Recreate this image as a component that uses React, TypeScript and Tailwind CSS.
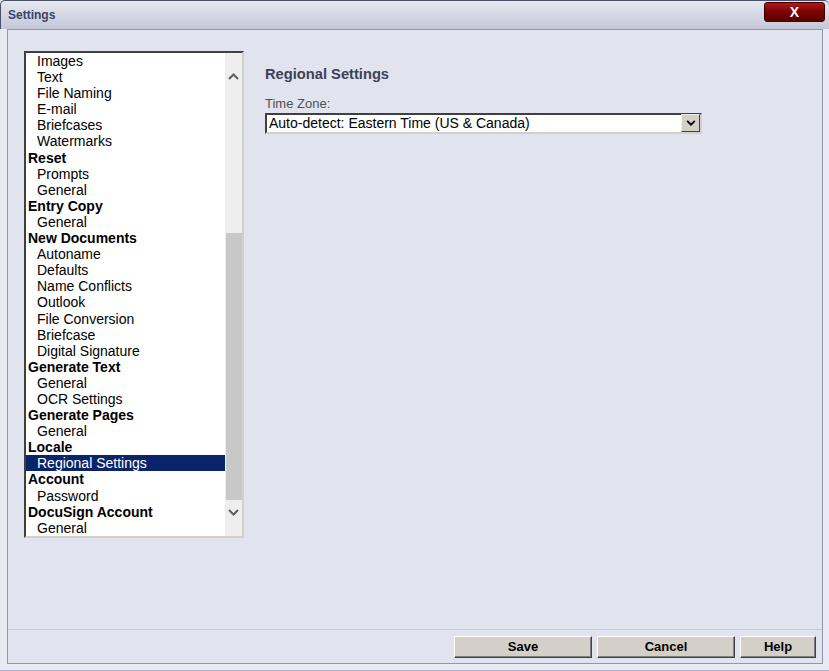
const font = { fontFamily: '"Liberation Sans", Arial, sans-serif' };

type Row = { label: string; header?: boolean; selected?: boolean };

const rows: Row[] = [
  { label: "Images" },
  { label: "Text" },
  { label: "File Naming" },
  { label: "E-mail" },
  { label: "Briefcases" },
  { label: "Watermarks" },
  { label: "Reset", header: true },
  { label: "Prompts" },
  { label: "General" },
  { label: "Entry Copy", header: true },
  { label: "General" },
  { label: "New Documents", header: true },
  { label: "Autoname" },
  { label: "Defaults" },
  { label: "Name Conflicts" },
  { label: "Outlook" },
  { label: "File Conversion" },
  { label: "Briefcase" },
  { label: "Digital Signature" },
  { label: "Generate Text", header: true },
  { label: "General" },
  { label: "OCR Settings" },
  { label: "Generate Pages", header: true },
  { label: "General" },
  { label: "Locale", header: true },
  { label: "Regional Settings", selected: true },
  { label: "Account", header: true },
  { label: "Password" },
  { label: "DocuSign Account", header: true },
  { label: "General" },
];

function Chevron({ up, className }: { up?: boolean; className?: string }) {
  return (
    <svg width="11" height="7" viewBox="0 0 11 7" className={className}>
      <path
        d={up ? "M1 6 L5.5 1.5 L10 6" : "M1 1 L5.5 5.5 L10 1"}
        fill="none"
        stroke="currentColor"
        strokeWidth="2"
      />
    </svg>
  );
}

function DialogButton({ label, width }: { label: string; width: string }) {
  return (
    <button
      type="button"
      className={`${width} h-[22px] bg-[#d4d0c8] border border-t-white border-l-white border-r-[#404040] border-b-[#404040] shadow-[inset_-1px_-1px_0_#808080] text-[13px] font-bold text-black leading-none`}
    >
      {label}
    </button>
  );
}

export default function App() {
  return (
    <div
      className="w-[829px] h-[671px] bg-[#e9eaf1] flex flex-col border-b border-[#b0b4c8] overflow-hidden"
      style={font}
    >
      {/* title bar */}
      <div className="h-[29px] shrink-0 flex justify-between rounded-t-[5px] border-t border-l border-[#4a5068] bg-gradient-to-b from-[#e6e8f0] to-[#c4c7d8]">
        <div className="pl-[7px] pt-[6px] text-[12px] font-bold text-[#3b4463] leading-[16px]">
          Settings
        </div>
        <div className="mt-[1px] mr-[4px] w-[61px] h-[20px] rounded-[3px] border border-[#3a0000] bg-gradient-to-b from-[#b01818] via-[#7c0404] to-[#5a0000] flex items-center justify-center text-white text-[14px] font-bold leading-none">
          X
        </div>
      </div>

      {/* dialog body */}
      <div className="flex-1 ml-[7px] mr-[6px] mb-[6px] border border-[#8e96b4] bg-[#e1e3ee] flex flex-col">
        <div className="flex-1 flex pl-[16px] pt-[21px]">
          {/* tree list */}
          <div className="w-[220px] h-[487px] flex border-2 border-t-[#404040] border-l-[#404040] border-r-[#d4d0c8] border-b-[#d4d0c8] bg-white">
            <div className="flex-1 overflow-hidden">
              {rows.map((r, i) => (
                <div
                  key={i}
                  className={`h-[16.1px] leading-[16.1px] text-[14px] whitespace-nowrap ${
                    r.header ? "pl-[2px] font-bold" : "pl-[11px]"
                  } ${r.selected ? "bg-[#0a246a] text-white" : "text-black"}`}
                >
                  {r.label}
                </div>
              ))}
            </div>
            <div className="w-[17px] bg-[#eeeeee] flex flex-col text-[#606060]">
              <div className="h-[180px] flex justify-center pt-[20px]">
                <Chevron up />
              </div>
              <div className="h-[267px] ml-[1px] bg-[#c8c8c8]" />
              <div className="flex-1 flex justify-center pt-[9px]">
                <Chevron />
              </div>
            </div>
          </div>

          {/* right pane */}
          <div className="ml-[21px] pt-[14px]">
            <div className="text-[14.7px] font-bold text-[#3c4256] leading-[18px]">
              Regional Settings
            </div>
            <div className="mt-[13px] text-[13px] text-[#505050] leading-[16px]">Time Zone:</div>
            <div className="mt-[1px] w-[437px] h-[21px] flex border-2 border-t-[#404040] border-l-[#404040] border-r-[#d4d0c8] border-b-[#d4d0c8] bg-white">
              <div className="flex-1 pl-[2px] text-[14px] leading-[17px] text-black whitespace-nowrap">
                Auto-detect: Eastern Time (US &amp; Canada)
              </div>
              <div className="w-[19px] h-[18px] mt-[-1px] bg-[#d4d0c8] border border-t-[#f0f0f0] border-l-[#f0f0f0] border-r-[#404040] border-b-[#404040] flex items-center justify-center text-black">
                <Chevron className="w-[10px] h-[6px]" />
              </div>
            </div>
          </div>
        </div>

        {/* footer */}
        <div className="h-[34px] border-t border-[#c5c9dc] flex items-center justify-end gap-[5px] pr-[6px]">
          <DialogButton label="Save" width="w-[138px]" />
          <DialogButton label="Cancel" width="w-[138px]" />
          <DialogButton label="Help" width="w-[76px]" />
        </div>
      </div>
    </div>
  );
}
